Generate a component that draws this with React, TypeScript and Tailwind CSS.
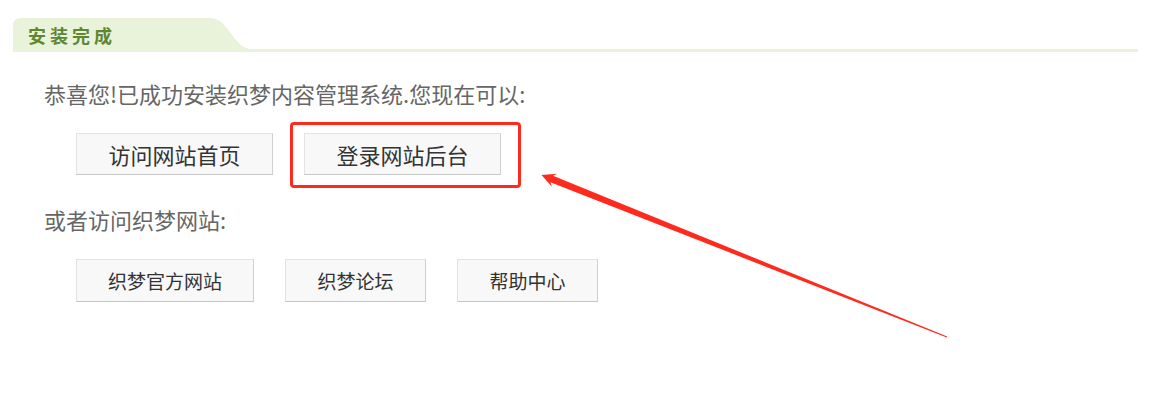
import React from 'react';

const primaryLinks = ['访问网站首页', '登录网站后台'];

const siteLinks = [
  { label: '织梦官方网站', width: 'w-[178px]' },
  { label: '织梦论坛', width: 'w-[141px]' },
  { label: '帮助中心', width: 'w-[141px]' },
];

const btn =
  'flex items-center justify-center bg-[#f8f8f8] border border-[#e3e3e3] border-r-[#cfcfcf] border-b-[#c6c6c6] text-[#333]';

export default function App() {
  return (
    <div
      className="relative w-[1156px] h-[401px] overflow-hidden bg-white"
      style={{ fontFamily: '"Noto Sans CJK SC", "Noto Sans", sans-serif' }}
    >
      {/* Tab header */}
      <div className="pt-[18px] pl-[13px]">
        <div className="w-[1125px] border-b-[3px] border-[#e8f3da]">
          <div className="flex items-end">
            <div className="h-[31px] w-[197px] bg-[#e8f3da] rounded-tl-[7px] pl-[15px] pt-[8px] text-[18px] leading-none font-bold tracking-[4px] text-[#5f8733]">
              安装完成
            </div>
            <svg width="42" height="31" viewBox="0 0 42 31" className="block">
              <path d="M0 0 C19 0 23 31 42 31 L0 31 Z" fill="#e8f3da" />
            </svg>
          </div>
        </div>
      </div>

      {/* Body */}
      <div className="pl-[44px]">
        <p className="mt-[30px] text-[22px] leading-none text-[#666]">
          恭喜您!已成功安装织梦内容管理系统.您现在可以:
        </p>

        <div className="mt-[29px] ml-[32px] flex gap-[31px]">
          {primaryLinks.map((label, i) => (
            <div key={label} className="relative">
              <div className={`${btn} w-[197px] h-[42px] text-[22px] leading-none`}>{label}</div>
              {i === 1 && (
                <div className="absolute -left-[14px] -right-[20px] -top-[11px] -bottom-[13px] border-[3px] border-[#fe2a1e] rounded-[4px]" />
              )}
            </div>
          ))}
        </div>

        <p className="mt-[33px] text-[22px] leading-none text-[#666]">或者访问织梦网站:</p>

        <div className="mt-[29px] ml-[32px] flex gap-[31px]">
          {siteLinks.map((l) => (
            <div key={l.label} className={`${btn} ${l.width} h-[43px] text-[19px] leading-none`}>
              {l.label}
            </div>
          ))}
        </div>
      </div>

      {/* Annotation arrow */}
      <svg
        className="absolute inset-0 pointer-events-none"
        width="1156"
        height="401"
        viewBox="0 0 1156 401"
      >
        <polygon
          points="541.5,175 557.1,173.7 553,175.8 947.2,336.5 946.8,337.5 550.4,182.3 551.9,186.7"
          fill="#fe2a1e"
        />
      </svg>
    </div>
  );
}
